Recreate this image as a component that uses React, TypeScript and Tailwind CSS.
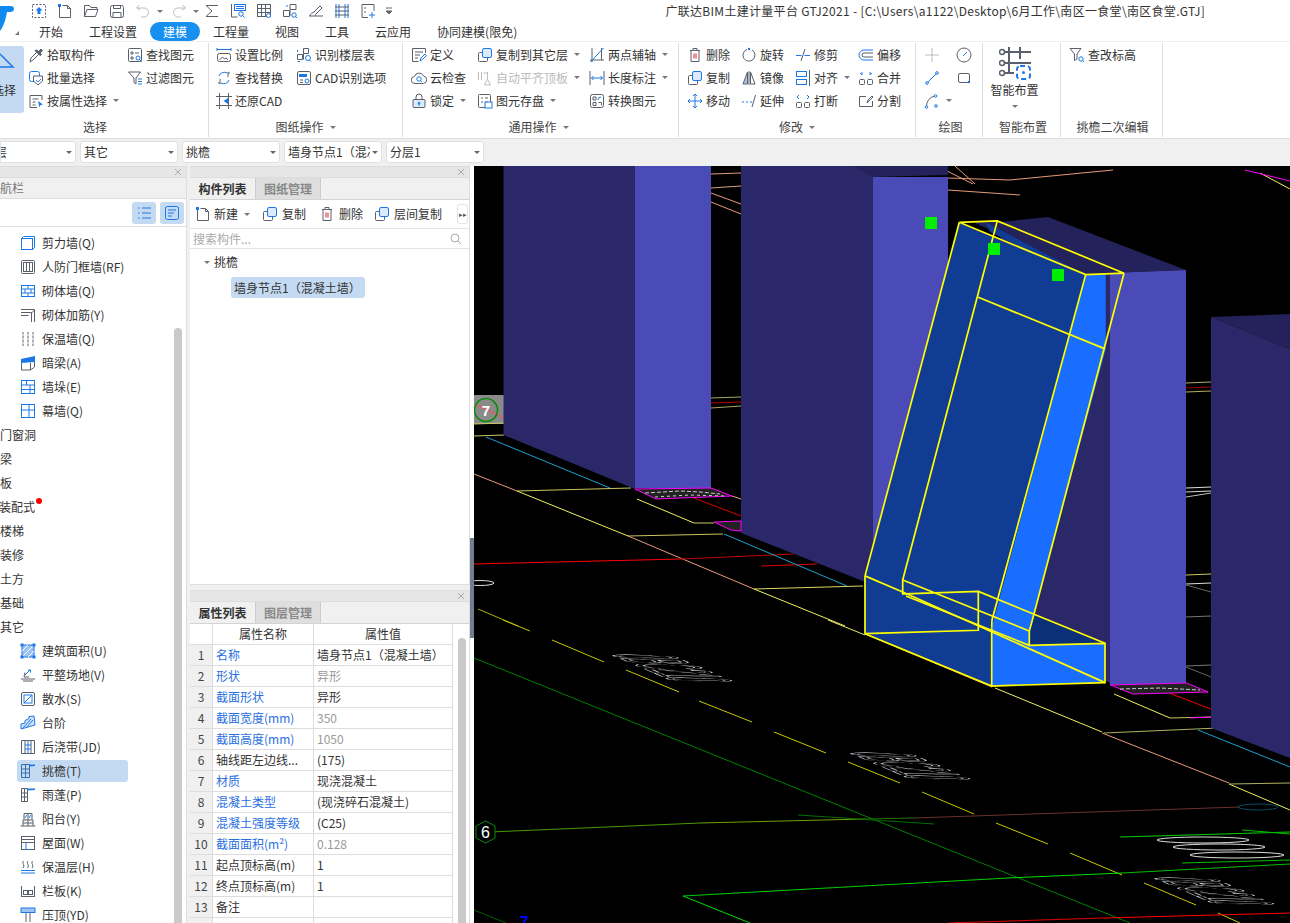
import type { ReactNode } from 'react';

const G = '#59606b';
const B = '#1c78e6';
const L = '#bdbdbd';

const P = ({ d, c = G, f = 'none' }: { d: string; c?: string; f?: string }) => <path d={d} stroke={c} fill={f} />;

const Ic = ({ children, s = 16 }: { children: ReactNode; s?: number }) => (
    <svg width={s} height={s} viewBox="0 0 16 16" fill="none" className="shrink-0">{children}</svg>
);

const Caret = () => <span className="ml-[6px] inline-block w-0 h-0 border-x-[3px] border-x-transparent border-t-[3px] border-t-[#777]" />;

const docCorner = <><P d="M2.5 3.5v11h11v-9l-3-3h-5" /><P d="M10.5 2.5v3h3" /><rect x="1" y="1" width="3" height="3" fill={B} /></>;
const trash = <><P d="M3 3.5h10M6 3.5v-2h4v2M4 3.5v11h8v-11" /><P d="M7 6.5v5M9 6.5v5" c="#e02020" /></>;
const copy = <><rect x="5.5" y="1.5" width="9" height="9" rx="1.5" stroke={B} fill="#dcebfb" /><P d="M5 5.5H2.5a1 1 0 0 0-1 1v7a1 1 0 0 0 1 1h7a1 1 0 0 0 1-1V11" /></>;

const icons: Record<string, ReactNode> = {
    pick: <><P d="M2 15l1-4 6-6 2 2-6 6z" /><P d="M9 3l1.5 1.5L13 2l1.5 1.5L12 6l1.5 1.5-1.5 1-5-5z" f="#59606b" /></>,
    batch: <><rect x="1.500" y="1.500" width="10" height="10" rx="2" stroke={B} /><P d="M5.500 6h9v5l-4.500 4-4.500-4z" f="#fff" /><P d="M8 10l2 2 3-3" c={B} /></>,
    attr: <><P d="M14 7V2.500H2v12h7" /><P d="M4.500 6h6M4.500 9h3M4.500 12h3" /><path d="M10 8l5 3.500-2.500.5-1 2.500z" fill={B} /></>,
    find: <><rect x="1.500" y="1.500" width="13" height="13" rx="1" stroke={G} /><P d="M4 5h2v2H4zM8 6h4M4 10h2v2H4z" /><circle cx="11" cy="11" r="2" stroke={B} /><P d="M12.500 12.500l2 2" c={B} /></>,
    filter: <><P d="M1.500 2h12L9 8v6l-2-1.500V8z" /><P d="M11 9h4M11 11.500h4M11 14h4" c={B} /></>,
    scale: <><P d="M1 2.500h14M1 1v3M15 1v3" c={B} /><rect x="1.500" y="6.500" width="13" height="8" rx="2" stroke={G} /><P d="M3.500 13l3-3 2 2 1.500-1 2 2" /></>,
    replace: <><P d="M3 6a5.500 5.500 0 0 1 8-3M13 10a5.500 5.500 0 0 1-8 3" c={B} /><P d="M4 9v5l-2-1.500M12 7V2l2 1.500" /></>,
    restore: <><P d="M3.500 0v16M0 3.500h16M12.500 0v16M0 12.500h16" /><path d="M12 5L7.500 8 12 11z" fill={B} /></>,
    floors: <><P d="M7.500 1.500h5v5h-5zM1.500 7.500h5v5h-5zM7.500 6.500v6" /><P d="M1.500 5v-2M4 14.500H1.500" c={B} /><circle cx="12" cy="11" r="2.500" stroke={B} /><P d="M13.500 13l1.500 1.500" c={B} /></>,
    cad: <><rect x="1.500" y="1.500" width="13" height="13" rx="1.500" stroke={G} /><rect x="3" y="4" width="8" height="3" fill={B} /><circle cx="11" cy="11" r="2" stroke={B} /><P d="M4 10h3M4 12.500h3" /></>,
    define: <><P d="M14.500 6V1.500h-13v13h6" /><P d="M4 5h8M4 8h5M4 11h3" /><P d="M9 14l1-3 4-4 1.500 1.500-4 4z" c={B} /></>,
    cloud: <><P d="M4 13.500a3.500 3.500 0 0 1-.5-7A4.800 4.800 0 0 1 12.500 6a3.800 3.800 0 0 1 0 7.500z" /><circle cx="8" cy="9" r="2.200" stroke={B} /><P d="M9.500 10.500l1.500 1.500" c={B} /></>,
    lock: <><rect x="2" y="6.500" width="12" height="8" rx="1" stroke={G} fill="#dcebfb" /><P d="M5 6.500V4a3 3 0 0 1 6 0v2.500" /><path d="M8 8.500l1.800 2H8.700v2H7.300v-2H6.200z" fill={B} /></>,
    copyTo: copy,
    autoFlat: <><P d="M1.500 2v8M4.500 2v8M6.500 3h4" c={L} /><P d="M10.500 2v7l-3 6M10.500 9l3 6M7.500 15h6" c={L} /></>,
    saveEl: <><rect x="1.500" y="1.500" width="12" height="13" rx="1" stroke={G} /><P d="M4 5h2M8 5h3M4 9h2M8 9h3" /><rect x="8" y="9" width="7" height="6" fill="#fff" stroke={B} /></>,
    twoAxis: <><P d="M3 1v14M1 13h14M12.500 1v12" /><P d="M1.500 15L14.500 1" c={B} /></>,
    dim: <><P d="M1 1v14M15 1v14" c={G} /><P d="M2.500 8h11M4.500 6l-2 2 2 2M11.500 6l2 2-2 2" c={B} /></>,
    convert: <><rect x="1.500" y="1.500" width="13" height="13" rx="2" stroke={G} /><P d="M4 4h3v3H4zM4 9.500h3v3H4zM9.500 9.500h3v3" /><P d="M9 7a3 3 0 0 1 3-3" c={B} /></>,
    del: trash,
    rotate: <><P d="M6 2.500A6 6 0 1 0 11 3" /><circle cx="8" cy="2" r="1.200" fill={B} /></>,
    trim: <><P d="M1 8.500h5.500M9.500 8.500H15" c={B} /><P d="M10 2L6 14" /></>,
    offset: <><P d="M15 3H6a5 5 0 0 0 0 10h9" c={B} /><P d="M15 6H6a2 2 0 0 0 0 4h9" /></>,
    copyB: copy,
    mirror: <><P d="M6.500 2v12H2z" c={G} f="#a9c4e6" /><P d="M9.500 2v12H14z" /><P d="M8 1v14" c={G} /></>,
    align: <><rect x="1.500" y="1.500" width="10" height="5" stroke={B} /><rect x="1.500" y="9.500" width="10" height="5" stroke={B} /><P d="M14.500 0v16" /></>,
    merge: <><rect x="1.500" y="9.500" width="5" height="5" rx="1" stroke={G} /><rect x="9.500" y="9.500" width="5" height="5" rx="1" stroke={G} /><P d="M2 3l2 2 M4 5V2M14 3l-2 2M12 5V2" c={B} /></>,
    move: <><P d="M8 1v14M1 8h14" c={B} /><P d="M6 3l2-2 2 2M6 13l2 2 2-2M3 6L1 8l2 2M13 6l2 2-2 2" c={B} /></>,
    extend: <><P d="M1 9h2M5 9h2M9 9h2" c={B} /><P d="M14.500 2L11 14" /></>,
    breakIc: <><rect x="1.500" y="9.500" width="5" height="5" rx="1" stroke={G} /><rect x="9.500" y="9.500" width="5" height="5" rx="1" stroke={G} /><P d="M4 2l-2 2 2 2M12 2l2 2-2 2" c={B} /></>,
    split: <><P d="M8 3.500H1.500v10h13V8" /><P d="M9 10l1-3 4-4 1 1-4 4z" /></>,
    snap: <><P d="M8 1v5M8 10v5M1 8h5M10 8h5" c={L} /><circle cx="8" cy="8" r="1.500" fill={L} /></>,
    dial: <><circle cx="8" cy="8" r="7" stroke={G} /><P d="M7 9l4-4" c={B} /></>,
    lineD: <><P d="M3 13L13 3" c={B} /><circle cx="3" cy="13" r="1.300" fill="#fff" stroke={B} /><circle cx="13" cy="3" r="1.300" fill="#fff" stroke={B} /></>,
    rectD: <><rect x="2.500" y="3.500" width="11" height="9" rx="1.500" stroke={G} /><circle cx="13" cy="12" r="1.200" fill={B} /></>,
    arc: <><P d="M2.500 14a10 10 0 0 1 9-11" /><circle cx="2.500" cy="14" r="1.300" fill="#fff" stroke={B} /><circle cx="11.500" cy="3" r="1.300" fill="#fff" stroke={B} /><circle cx="12" cy="13" r="1.300" fill="#fff" stroke={B} /></>,
    editEl: <><P d="M1 1.500h11L8 7v5l-2.500 1.500V7z" /><circle cx="12" cy="12" r="2.200" stroke={B} /><P d="M13.500 13.500l1.500 1.500" c={B} /></>,

    shear: <><rect x="1.500" y="3.500" width="11" height="11" stroke={B} /><P d="M1.500 3.500l2-2h11v11l-2 2" c={B} /></>,
    door: <><rect x="1.500" y="1.500" width="13" height="13" rx="1" stroke={G} /><rect x="3.500" y="3.500" width="9" height="9" stroke={G} /><P d="M6.500 3.500v9M9.500 3.500v9" /></>,
    brick: <><rect x="1.500" y="2.500" width="13" height="11" stroke={B} /><P d="M1.500 6h13M1.500 10h13M8 2.500V6M5 6v4M11 6v4M8 10v3.500" c={B} /></>,
    rebar: <><P d="M1 2.500h13.500V15M1 5.500h10.500V15M1 8.500h7.500" /><P d="M14.500 3L11.500 6" /></>,
    insul: <><P d="M3 1v14M8 1v14M13 1v14" /><P d="M1 4h14M1 8h14M1 12h14" c="#fff" /></>,
    beam: <><path d="M1 4l14-3v6L1 8z" fill={B} /><P d="M1.500 8v7h9V8M10.500 15l4-3V7" /></>,
    pier: <><rect x="1.500" y="1.500" width="13" height="13" stroke={B} /><P d="M1.500 6h13M1.500 10.500h13M6.500 1.500V6M10 6v4.500M10 10.500v4" c={B} /></>,
    curtain: <><rect x="1.500" y="1.500" width="13" height="13" stroke={B} /><P d="M1.500 7h13M9 1.500v13" c={B} /></>,
    area: <><rect x="2" y="2" width="12" height="12" fill="#9cc4f2" stroke={B} /><P d="M2 8l6-6M2 14L14 2M8 14l6-6" c="#fff" /><rect x="0.500" y="0.500" width="3" height="3" fill={B} /><rect x="12.500" y="0.500" width="3" height="3" fill={B} /><rect x="0.500" y="12.500" width="3" height="3" fill={B} /><rect x="12.500" y="12.500" width="3" height="3" fill={B} /></>,
    level: <><P d="M5 8l5-5M8 3h2.500v2.500" c={B} /><P d="M5 5.500L4 10h5" /><P d="M1 12h14M3 14h10" c={G} /></>,
    apron: <><rect x="1.500" y="1.500" width="13" height="13" rx="1.500" stroke={G} /><P d="M4 12l8-8" c={B} /><rect x="4" y="4" width="8" height="8" stroke={B} /></>,
    steps: <><path d="M1 9l4-1V5.500l4-2V1.500l5-.5 1 9-14 4z" fill="#cfe2f8" stroke={B} /><P d="M3 13l8-9M6 13l7-8" c={B} /></>,
    post: <><P d="M1.500 1.500h13v13h-13zM5 1.500v13M11 1.500v13" /><P d="M5 6h6M5 10h6M8 1.500v13" c={B} /></>,
    eave: <><P d="M1.500 1.500h8v13h-8zM5.500 1.500v13M1.500 6h8M1.500 10h8" c="#3a6ea8" /><path d="M9.500 1.500H15v1.500L9.500 3.500z" fill={B} /></>,
    canopy: <><P d="M1.500 1.500h6v13h-6zM4.500 1.500v13M1.500 6h6M1.500 10h6" /><path d="M7.500 1.500H15v1.500L7.500 3.500z" fill={B} /></>,
    balcony: <><P d="M.5 15h15M3 15V9h10v6M8 9v6M3 12h10" /><P d="M4 9V2.500h8V9M8 2.500V9" c={G} /><P d="M5 7l2-3M9 7l2-3" c={B} /></>,
    roof: <><rect x="1.500" y="1.500" width="13" height="13" stroke={G} /><P d="M1.500 4.500h13M1.500 7.500h13" /><P d="M6 7.500v7h4" c={B} /></>,
    heat: <><P d="M3.500 2c-2 2.500 2 4-.5 7M8 2c-2 2.500 2 4-.5 7M12.500 2c-2 2.500 2 4-.5 7" /><P d="M1 11.500h14M1 14h14" c={B} /></>,
    slab: <><P d="M1.500 3v10.500h13V3M1 13.500h14" /><rect x="3.500" y="7.500" width="4" height="4" stroke={G} /><rect x="8.500" y="7.500" width="4" height="4" stroke={G} /></>,
    coping: <><rect x="1" y="1" width="14" height="4.500" fill="#9cc4f2" stroke={B} /><P d="M6 5.500V15M10 5.500V15" /></>,
};

const Item = ({ ic, text, caret, disabled }: { ic: string; text: string; caret?: boolean; disabled?: boolean }) => (
    <div className={`h-[23px] flex items-center whitespace-nowrap ${disabled ? 'text-[#bbbbbb]' : ''}`}>
        <Ic>{icons[ic]}</Ic>
        <span className="ml-[3px]">{text}</span>
        {caret && <Caret />}
    </div>
);

const Group = ({ title, w, caret, tp, children }: { title: string; w: string; caret?: boolean; tp?: string; children: ReactNode }) => (
    <div className={`${w} shrink-0 h-[94px] mt-[1px] flex flex-col border-r border-[#dddddd]`}>
        <div className="h-[74px] flex">{children}</div>
        <div className={`h-[20px] flex items-center justify-center text-[#444] ${tp ?? ''}`}>
            {title}{caret && <Caret />}
        </div>
    </div>
);

const Select = ({ text, w = 'w-[98px]', clip }: { text: string; w?: string; clip?: boolean }) => (
    <div className={`${w} h-[22px] bg-white border border-[#e0e0e0] rounded-[3px] flex items-center justify-between pl-[3px] pr-[3px] shrink-0 overflow-hidden`}>
        <span className={clip ? 'w-[82px] overflow-hidden whitespace-nowrap' : 'whitespace-nowrap'}>{text}</span>
        <span className="w-0 h-0 border-x-[3px] border-x-transparent border-t-[3px] border-t-[#666]" />
    </div>
);

const CloseStrip = () => (
    <div className="h-[12px] bg-[#e6e6e6] border-y border-[#dddddd] flex items-center justify-end pr-[4px] text-[#aaaaaa] shrink-0">
        <svg width="8" height="8" viewBox="0 0 8 8"><path d="M1 1l6 6M7 1L1 7" stroke="#aaa" /></svg>
    </div>
);

const Tabs = ({ a, b }: { a: string; b: string }) => (
    <div className="h-[22px] flex bg-[#f0f0f0] border-b border-[#d4d4d4] shrink-0">
        <div className="w-[65px] flex items-center justify-center font-bold text-[#333]">{a}</div>
        <div className="w-[66px] flex items-center justify-center bg-[#dedede] border-x border-[#cccccc] text-[#888888] font-bold">{b}</div>
    </div>
);

const NAV: [string, string?, boolean?][] = [
    ['剪力墙(Q)', 'shear'], ['人防门框墙(RF)', 'door'], ['砌体墙(Q)', 'brick'], ['砌体加筋(Y)', 'rebar'], ['保温墙(Q)', 'insul'], ['暗梁(A)', 'beam'], ['墙垛(E)', 'pier'], ['幕墙(Q)', 'curtain'],
    ['门窗洞'], ['梁'], ['板'], ['装配式'], ['楼梯'], ['装修'], ['土方'], ['基础'], ['其它'],
    ['建筑面积(U)', 'area'], ['平整场地(V)', 'level'], ['散水(S)', 'apron'], ['台阶', 'steps'], ['后浇带(JD)', 'post'], ['挑檐(T)', 'eave', true], ['雨蓬(P)', 'canopy'], ['阳台(Y)', 'balcony'], ['屋面(W)', 'roof'], ['保温层(H)', 'heat'], ['栏板(K)', 'slab'], ['压顶(YD)', 'coping'],
];

const PROPS: [string, string, 'b' | 'k', 'k' | 'g'][] = [
    ['名称', '墙身节点1（混凝土墙）', 'b', 'k'],
    ['形状', '异形', 'b', 'g'],
    ['截面形状', '异形', 'b', 'k'],
    ['截面宽度(mm)', '350', 'b', 'g'],
    ['截面高度(mm)', '1050', 'b', 'g'],
    ['轴线距左边线...', '(175)', 'k', 'k'],
    ['材质', '现浇混凝土', 'b', 'k'],
    ['混凝土类型', '(现浇碎石混凝土)', 'b', 'k'],
    ['混凝土强度等级', '(C25)', 'b', 'k'],
    ['截面面积(m²)', '0.128', 'b', 'g'],
    ['起点顶标高(m)', '1', 'k', 'k'],
    ['终点顶标高(m)', '1', 'k', 'k'],
    ['备注', '', 'k', 'k'],
    ['', '', 'k', 'k'],
];

// x1, y1, x2, y2, colour
const LINES: [number, number, number, number, string][] = [
    [711, 174, 741, 173, '#e89a7a'], [711, 188, 741, 186, '#d9a080'], [711, 193, 741, 204, '#e89a7a'], [711, 202, 741, 214, '#e89a7a'],
    [711, 398, 741, 397, '#a8a860'], [711, 403, 741, 402, '#c00000'], [711, 408, 741, 406, '#a8a860'],
    [474, 436, 504, 435, '#c8c860'], [486, 437, 610, 488, '#1aa0d0'], [474, 474, 517, 491, '#e89a7a'], [517, 491, 631, 488, '#c8c860'],
    [517, 491, 628, 536, '#f0f060'], [628, 536, 723, 534, '#c8c860'], [628, 536, 754, 589, '#e89a7a'], [754, 589, 863, 586, '#d8d860'], [754, 589, 845, 626, '#f0f060'],
    [474, 564, 681, 559, '#ff0000'], [681, 559, 794, 554, '#c00000'], [761, 566, 817, 564, '#e00000'], [724, 534, 847, 586, '#1aa0d0'],
    [694, 498, 741, 516, '#e00000'], [637, 499, 694, 523, '#f0f060'], [694, 523, 714, 523, '#c8c860'], [732, 496, 741, 499, '#e89a7a'], [478, 609, 518, 626, '#b0b000'],
    [937, 166, 973, 184, '#e89a7a'], [948, 178, 1010, 180, '#e89a7a'], [1010, 180, 1113, 170, '#e89a7a'], [948, 190, 1020, 195, '#e89a7a'], [955, 166, 975, 184, '#e89a7a'],
    [1260, 173, 1290, 189, '#f0f060'], [1245, 170, 1290, 181, '#ff00ff'],
    [503, 620, 530, 631, '#c8c800'], [552, 640, 604, 662, '#c8c800'], [626, 670, 679, 692, '#c8c800'], [699, 701, 752, 722, '#c8c800'], [774, 732, 826, 753, '#c8c800'], [848, 762, 900, 783, '#c8c800'], [922, 792, 974, 814, '#c8c800'], [996, 823, 1048, 844, '#c8c800'], [1070, 853, 1122, 875, '#c8c800'], [1144, 883, 1196, 905, '#c8c800'], [1218, 913, 1240, 923, '#c8c800'],
    [474, 658, 1130, 923, '#008000'], [490, 832, 700, 823, '#4a9a00'], [700, 823, 865, 819, '#70a000'], [865, 819, 914, 818, '#2a7000'], [914, 818, 1240, 807, '#6b3030'], [798, 815, 934, 824, '#007000'],
    [828, 620, 865, 635, '#e8e860'], [865, 634, 992, 687, '#ffb050'], [995, 688, 1102, 732, '#f0f060'], [1102, 733, 1229, 783, '#e89a7a'], [1104, 733, 1218, 728, '#b0b060'], [1229, 784, 1290, 810, '#f0f060'], [1229, 784, 1290, 783, '#b0b060'], [1198, 730, 1290, 767, '#1aa0d0'],
    [1114, 694, 1170, 718, '#f0f060'], [1170, 718, 1211, 717, '#c8c860'], [1169, 693, 1211, 709, '#f00000'],
    [1186, 383, 1211, 382, '#b0b060'], [1186, 388, 1211, 387, '#a00000'], [1186, 392, 1211, 391, '#b0b060'], [1186, 488, 1211, 487, '#dddddd'], [1186, 492, 1211, 491, '#dddddd'], [1186, 497, 1211, 493, '#bbbbbb'],
    [1186, 575, 1211, 574, '#c8c860'], [1186, 584, 1211, 583, '#dddddd'], [1186, 585, 1211, 592, '#666666'], [1186, 617, 1211, 616, '#777777'], [1186, 666, 1211, 665, '#777777'], [1186, 667, 1211, 677, '#666666'],
    [683, 896, 1008, 878, '#00d000'], [1008, 878, 1122, 873, '#00e000'], [1122, 873, 1290, 864, '#00c000'], [683, 896, 750, 923, '#00e000'],
    [1120, 837, 1290, 832, '#00d000'], [1242, 830, 1290, 834, '#00c000'], [1182, 863, 1290, 860, '#00c000'], [948, 923, 1104, 918, '#e00000'], [1104, 918, 1290, 913, '#ff0000'], [474, 910, 506, 923, '#006000'],
];

const YELLOW = [
    '959.300,222.300 997.300,220.900 1124,273.200 1085.700,274.600 959.300,222.300',
    '865,575.900 959.300,222.300', '902.700,580 997.300,220.900', '978.300,297.300 1105,348.900',
    '1085.700,274.600 992,620 991.700,627.500', '1124,273.200 1034,614 1029.300,631 1029.300,645.400 1105,643.300 1105,682.600 991.700,686 991.700,627.500',
    '865,575.900 865,633.700 991.700,686', '865,633.700 978.300,630.300 978.300,591.400 905,593.800 902.700,593.800 902.700,580 1029.300,631',
    '978.300,591.400 1105,643.300', '865,575.900 902.700,592 1105,682.600', '906,596 1029.300,645.400',
];

const CADTEXT: [string, number, number][] = [
    ['0BC210', 630, 670], ['0BC210', 868, 768], ['0BC210', 1172, 893],
];

const Canvas = () => (
    <svg width="816" height="757" viewBox="474 166 816 757" className="block">
        {LINES.map(([x1, y1, x2, y2, c], i) => <line key={i} x1={x1} y1={y1} x2={x2} y2={y2} stroke={c} />)}

        {/* grid bubble 7 */}
        <rect x="474" y="395" width="30" height="29" fill="#8a8a8a" />
        <line x1="474" y1="424" x2="504" y2="423" stroke="#c8c860" />
        <line x1="474" y1="404" x2="504" y2="418" stroke="#ff5050" />
        <circle cx="486" cy="410" r="11.500" stroke="#0a8a0a" strokeWidth="1.500" fill="none" />
        <text x="486" y="416" fill="#fff" fontSize="15" fontWeight="700" textAnchor="middle" fontFamily="Liberation Sans, sans-serif">7</text>

        {/* columns */}
        <polygon points="503.500,166 635,166 635,489 503.500,435" fill="#2a2868" />
        <rect x="635" y="166" width="76" height="322" fill="#4b4bb8" />
        <polygon points="741,166 873,166 873,585 741,533" fill="#2a2868" />
        <polygon points="853,166 948,166 948,175 873,177" fill="#23225a" />
        <rect x="873" y="177" width="75" height="400" fill="#4b4bb8" />
        <polygon points="1000,222 1048,217 1186,270 1110,273" fill="#23225a" />
        <polygon points="1000,230 1110,273 1110,683 1030,645" fill="#2a2868" />
        <polygon points="1211,317 1290,314 1290,349" fill="#23225a" />
        <polygon points="1211,317 1290,349 1290,758 1211,728" fill="#2a2868" />

        {/* selected eave */}
        <polygon points="973,222 997,221 1124,273 1086,275" fill="#23225a" />
        <polygon points="985,222 1086,275 1060,266 990,232" fill="#103c94" />
        <polygon points="959.300,222.300 1085.700,274.600 991.700,627.500 991.700,686 865,633.700 865,575.900" fill="#103c94" />
        <polygon points="1085.700,274.600 1105.700,274 1105.700,349 1029.300,631 1029.300,645.400 1105,643.300 1105,682.600 991.700,686 991.700,627.500" fill="#1a6eff" />
        <polygon points="1034,614 1105,643.300 1029.300,645.400 1029.300,631" fill="#0c2f7a" />
        <polygon points="1110,273 1186,270 1186,683 1110,685" fill="#4b4bb8" />
        {YELLOW.map((p, i) => <polyline key={i} points={p} fill="none" stroke="#ffff00" strokeWidth="1.700" />)}

        <rect x="925" y="217" width="12" height="12" fill="#00ee00" />
        <rect x="988" y="243" width="12" height="12" fill="#00ee00" />
        <rect x="1052" y="269" width="12" height="12" fill="#00ee00" />

        {/* rebar markers at column feet */}
        <polygon points="635,489 711,488 732,496 656,499" fill="#222" stroke="#ff00ff" />
        <polyline points="645,493 680,491 700,492 720,494" fill="none" stroke="#ccc" strokeDasharray="4 2" />
        <polyline points="655,497 690,495 725,496" fill="none" stroke="#ccc" strokeDasharray="3 3" />
        <polygon points="714,522 741,521 741,531 731,530" fill="#222" stroke="#ff00ff" />
        <polygon points="1110.500,685 1186.500,683 1208,692 1133,694" fill="#222" stroke="#ff00ff" />
        <polyline points="1120,689 1160,688 1200,690" fill="none" stroke="#ccc" strokeDasharray="4 2" />
        <polyline points="1190,718 1211,717" fill="none" stroke="#ff00ff" />

        {/* axis labels */}
        {CADTEXT.map(([t, x, y]) => (
            <text key={x} transform={`matrix(1.75 0.75 -9 -0.2 ${x} ${y})`} x="-22" y="-2" fontSize="10" fontFamily="Liberation Sans, sans-serif" fill="none" stroke="#f0f0f0" strokeWidth="1" style={{ vectorEffect: 'non-scaling-stroke' }}>{t}</text>
        ))}
        <ellipse cx="1203" cy="840" rx="46" ry="3" fill="none" stroke="#ddd" />
        <ellipse cx="1219" cy="847" rx="46" ry="3" fill="none" stroke="#ddd" />
        <ellipse cx="1237" cy="855" rx="47" ry="3" fill="none" stroke="#ddd" />
        <ellipse cx="480" cy="583" rx="14" ry="2.500" fill="none" stroke="#ddd" />

        <polygon points="485.500,821 495,826 495,838 485.500,843 476,838 476,826" fill="#000" stroke="#0a8a0a" />
        <text x="485.500" y="838" fill="#fff" fontSize="16" textAnchor="middle" fontFamily="Liberation Sans, sans-serif">6</text>
        <ellipse cx="1258" cy="807" rx="20" ry="3" fill="none" stroke="#0a4a66" />
        <text x="524" y="928" fill="#0000ff" fontSize="16" fontWeight="700" textAnchor="middle" fontFamily="Liberation Sans, sans-serif">7</text>
    </svg>
);

const App = () => {
    return (
        <div className="w-[1290px] h-[923px] overflow-hidden flex flex-col bg-[#f0f0f0] text-[12px] leading-none text-[#333] [text-spacing-trim:space-all]" style={{ fontFamily: '"Noto Sans CJK SC", "Liberation Sans", sans-serif' }}>
            {/* title + tabs */}
            <div className="h-[41px] bg-white flex shrink-0">
                <div className="w-[26px] shrink-0 relative">
                    <svg width="16" height="32" viewBox="0 0 16 32" className="absolute left-0 top-[2px]">
                        <path d="M0 4h10c3 0 4 1 4 3s-2 3-4 3H7c-1 6-3 14-7 19z" fill="#0d8af0" />
                    </svg>
                    <span className="absolute left-[15px] top-[31px] border-l-[4px] border-l-transparent border-b-[4px] border-b-[#777]" />
                </div>
                <div className="flex-1 flex flex-col">
                    <div className="h-[22px] flex items-center pl-[5px] gap-[10px]">
                        <Ic><rect x="1.500" y="1.500" width="13" height="13" stroke={G} strokeDasharray="2 1.500" /><path d="M8 4l3.500 3.500H9.500V11h-3V7.500H4.500z" fill={B} /></Ic>
                        <Ic>{docCorner}</Ic>
                        <Ic><P d="M1.500 13.500v-11h5l1.500 2h6v2" /><P d="M1.500 13.500l2.500-7h11l-2.500 7z" /></Ic>
                        <Ic><rect x="1.500" y="2.500" width="13" height="12" rx="2" stroke={G} /><P d="M4.500 2.500v3h7v-3M4 14.500v-5h8v5" /></Ic>
                        <div className="w-[26px] flex items-center">
                            <Ic><P d="M4 2L1.500 5 5 7M2 5h7a4 4 0 0 1 0 9H6" c={L} /></Ic>
                            <Caret />
                        </div>
                        <div className="w-[23px] flex items-center">
                            <Ic><P d="M12 2l2.500 3L11 7M14 5H7a4 4 0 0 0 0 9h3" c={L} /></Ic>
                            <Caret />
                        </div>
                        <Ic><P d="M14 2.500H2l6 5.500-6 5.500h12" /></Ic>
                        <Ic><P d="M1.500 1v13h6" /><rect x="4.500" y="1.500" width="11" height="6" stroke={B} /><P d="M6 3.500h8M6 5.500h8" c={B} /><circle cx="11" cy="11" r="2.200" stroke={B} /><P d="M12.500 12.500l2 2" c={B} /></Ic>
                        <Ic><rect x="1.500" y="1.500" width="13" height="12" stroke={G} /><P d="M1.500 5.500h13M1.500 9.500h13M5.500 1.500v12M9.500 1.500v12" /><circle cx="12.500" cy="12.500" r="2" stroke={B} fill="#fff" /></Ic>
                        <Ic><P d="M8 1.500h6v5H8zM1.500 7.500h6v6h-6zM8 7v6" /><circle cx="12" cy="12" r="2.200" stroke={B} /><P d="M13.500 13.500l1.500 1.500M4 3h2" c={B} /></Ic>
                        <Ic><P d="M1 13h14M2 13c0-3 3-3 4-4l6-6 2 2-6 6c-1 1-1 2-1 2" /></Ic>
                        <Ic><P d="M2 1v14M14 1v14M5 1v14M11 1v14" c={B} /><P d="M1 4h14M1 8h14M1 12h14" /></Ic>
                        <Ic><P d="M14 8V1.500H2v13h6" /><P d="M4 5h2M4 9h2" /><P d="M12 9v6M9 12h6" c={B} /></Ic>
                        <svg width="6" height="8" viewBox="0 0 6 8"><path d="M0 1h6M0 4l3 3 3-3z" stroke="#666" fill="#666" /></svg>
                        <span className="ml-auto mr-[85px] text-[#333] whitespace-nowrap tracking-[0.31px]">广联达BIM土建计量平台 GTJ2021 - [C:\Users\a1122\Desktop\6月工作\南区一食堂\南区食堂.GTJ]</span>
                    </div>
                    <div className="h-[19px] flex items-center">
                        {['开始', '工程设置', '建模', '工程量', '视图', '工具', '云应用', '协同建模(限免)'].map(t => (
                            <div key={t} className={`h-[19px] px-[13px] flex items-center rounded-full ${t === '建模' ? 'bg-[#1890f0] text-white' : ''}`}>{t}</div>
                        ))}
                    </div>
                </div>
            </div>

            {/* ribbon */}
            <div className="h-[98px] bg-white border-t border-[#f0f0f0] border-b border-b-[#dddddd] flex shrink-0">
                <Group title="选择" w="w-[209px]" tp="pr-[18px]">
                    <div className="w-[24px] h-[67px] mt-[3px] bg-[#c4daf2] rounded-r-[3px] overflow-hidden flex flex-col shrink-0">
                        <svg width="24" height="28" viewBox="0 0 24 28" className="mt-[6px] shrink-0"><path d="M0 2l13 13H0" stroke={B} strokeWidth="1.500" fill="none" /></svg>
                        <span className="-ml-[8px] mt-[4px] whitespace-nowrap">选择</span>
                    </div>
                    <div className="ml-[4px] w-[99px]">
                        <Item ic="pick" text="拾取构件" />
                        <Item ic="batch" text="批量选择" />
                        <Item ic="attr" text="按属性选择" caret />
                    </div>
                    <div>
                        <Item ic="find" text="查找图元" />
                        <Item ic="filter" text="过滤图元" />
                    </div>
                </Group>
                <Group title="图纸操作" w="w-[194px]" caret>
                    <div className="ml-[7px] w-[80px]">
                        <Item ic="scale" text="设置比例" />
                        <Item ic="replace" text="查找替换" />
                        <Item ic="restore" text="还原CAD" />
                    </div>
                    <div>
                        <Item ic="floors" text="识别楼层表" />
                        <Item ic="cad" text="CAD识别选项" />
                    </div>
                </Group>
                <Group title="通用操作" w="w-[276px]" tp="pr-[4px]" caret>
                    <div className="ml-[8px] w-[66px]">
                        <Item ic="define" text="定义" />
                        <Item ic="cloud" text="云检查" />
                        <Item ic="lock" text="锁定" caret />
                    </div>
                    <div className="w-[112px]">
                        <Item ic="copyTo" text="复制到其它层" caret />
                        <Item ic="autoFlat" text="自动平齐顶板" caret disabled />
                        <Item ic="saveEl" text="图元存盘" caret />
                    </div>
                    <div>
                        <Item ic="twoAxis" text="两点辅轴" caret />
                        <Item ic="dim" text="长度标注" caret />
                        <Item ic="convert" text="转换图元" />
                    </div>
                </Group>
                <Group title="修改" w="w-[237px]" caret>
                    <div className="ml-[8px] w-[54px]">
                        <Item ic="del" text="删除" />
                        <Item ic="copyB" text="复制" />
                        <Item ic="move" text="移动" />
                    </div>
                    <div className="w-[54px]">
                        <Item ic="rotate" text="旋转" />
                        <Item ic="mirror" text="镜像" />
                        <Item ic="extend" text="延伸" />
                    </div>
                    <div className="w-[63px]">
                        <Item ic="trim" text="修剪" />
                        <Item ic="align" text="对齐" caret />
                        <Item ic="breakIc" text="打断" />
                    </div>
                    <div>
                        <Item ic="offset" text="偏移" />
                        <Item ic="merge" text="合并" />
                        <Item ic="split" text="分割" />
                    </div>
                </Group>
                <Group title="绘图" w="w-[67px]" tp="pl-[3px]">
                    <div className="ml-[8px] w-[32px]">
                        <div className="h-[23px] flex items-center"><Ic>{icons.snap}</Ic></div>
                        <div className="h-[23px] flex items-center"><Ic>{icons.lineD}</Ic></div>
                        <div className="h-[23px] flex items-center"><Ic>{icons.arc}</Ic><Caret /></div>
                    </div>
                    <div>
                        <div className="h-[23px] flex items-center"><Ic>{icons.dial}</Ic></div>
                        <div className="h-[23px] flex items-center"><Ic>{icons.rectD}</Ic></div>
                    </div>
                </Group>
                <Group title="智能布置" w="w-[78px]" tp="pl-[3px]">
                    <div className="w-full flex flex-col items-center -ml-[7px]">
                        <svg width="32" height="34" viewBox="0 0 32 34" className="mt-[4px] shrink-0">
                            <path d="M10 0v26M21 0v12M3 5h29M3 16h29M3 26h12" stroke={G} strokeWidth="2" fill="none" />
                            <circle cx="3" cy="5" r="2.500" fill="#fff" stroke={G} strokeWidth="1.500" />
                            <circle cx="3" cy="16" r="2.500" fill="#fff" stroke={G} strokeWidth="1.500" />
                            <circle cx="3" cy="26" r="2.500" fill="#fff" stroke={G} strokeWidth="1.500" />
                            <rect x="18" y="19" width="13" height="13" rx="3" stroke={B} strokeWidth="2" strokeDasharray="5 3" fill="none" />
                            <circle cx="24.500" cy="25.500" r="1.500" fill={B} />
                        </svg>
                        <span className="mt-[3px]">智能布置</span>
                        <span className="mt-[9px] w-0 h-0 border-x-[3px] border-x-transparent border-t-[3px] border-t-[#777]" />
                    </div>
                </Group>
                <Group title="挑檐二次编辑" w="w-[102px]" tp="pl-[2px]">
                    <div className="ml-[8px]">
                        <Item ic="editEl" text="查改标高" />
                    </div>
                </Group>
            </div>

            {/* selectors */}
            <div className="h-[27px] flex items-start pt-[2px] gap-[4px] shrink-0">
                <div className="w-[76px] h-[22px] bg-white border border-[#e0e0e0] rounded-r-[3px] flex items-center justify-between pr-[3px] overflow-hidden shrink-0">
                    <span className="-ml-[6px]">层</span>
                    <span className="w-0 h-0 border-x-[3px] border-x-transparent border-t-[3px] border-t-[#666]" />
                </div>
                <Select text="其它" />
                <Select text="挑檐" />
                <Select text="墙身节点1（混凝土墙）" clip />
                <Select text="分层1" />
            </div>

            {/* main */}
            <div className="flex-1 flex min-h-0">
                {/* nav */}
                <div className="w-[187px] mr-[3px] shrink-0 bg-white border-r border-[#dddddd] flex flex-col relative overflow-hidden">
                    <CloseStrip />
                    <div className="h-[21px] bg-[#f0f0f0] border-b border-[#dddddd] flex items-center text-[#777] shrink-0">
                        <span className="-ml-[12px]">导航栏</span>
                    </div>
                    <div className="h-[28px] border-b border-[#dddddd] flex items-center justify-end gap-[4px] pr-[2px] shrink-0">
                        <div className="w-[24px] h-[22px] bg-[#c4daf2] rounded-[3px] flex items-center justify-center">
                            <Ic><P d="M2 3h1.500M2 8h1.500M2 13h1.500" c={B} /><P d="M6 3h9M6 8h9M6 13h9" c={B} /></Ic>
                        </div>
                        <div className="w-[24px] h-[22px] bg-[#c4daf2] rounded-[3px] flex items-center justify-center">
                            <Ic><rect x="1.500" y="1.500" width="13" height="13" rx="2" stroke={B} /><P d="M4 5h8M4 8h6M4 11h4" c={B} /></Ic>
                        </div>
                    </div>
                    <div className="pt-[4px]">
                        {NAV.map(([t, ic, sel]) => ic ? (
                            <div key={t} className="h-[24px] flex items-center">
                                <div className={`ml-[17px] h-[22px] flex items-center pl-[3px] rounded-[3px] ${sel ? 'w-[111px] bg-[#c4daf2]' : ''}`}>
                                    <Ic>{icons[ic]}</Ic>
                                    <span className="ml-[6px] whitespace-nowrap">{t}</span>
                                </div>
                            </div>
                        ) : (
                            <div key={t} className="h-[24px] flex items-center relative">
                                <span className={t === '装配式' ? '-ml-[1px]' : ''}>{t}</span>
                                {t === '装配式' && <span className="absolute left-[36px] top-[3px] w-[6px] h-[6px] rounded-full bg-[#ff0000]" />}
                            </div>
                        ))}
                    </div>
                    <div className="absolute left-[174px] top-[162px] bottom-0 w-[8px] rounded-t-[4px] bg-[#c9c9c9]" />
                </div>

                {/* component + property panels */}
                <div className="w-[284px] shrink-0 flex flex-col relative">
                    <div className="w-[280px] h-[419px] bg-white border-r border-b border-[#dddddd] flex flex-col overflow-hidden">
                        <CloseStrip />
                        <Tabs a="构件列表" b="图纸管理" />
                        <div className="h-[29px] flex items-center pl-[5px] border-b border-[#e4e4e4] relative shrink-0">
                            <Ic>{docCorner}</Ic>
                            <span className="ml-[3px]">新建</span>
                            <Caret />
                            <span className="ml-[12px]"><Ic>{copy}</Ic></span>
                            <span className="ml-[4px]">复制</span>
                            <span className="ml-[13px]"><Ic>{trash}</Ic></span>
                            <span className="ml-[4px]">删除</span>
                            <span className="ml-[11px]"><Ic>{copy}</Ic></span>
                            <span className="ml-[4px]">层间复制</span>
                            <div className="absolute right-[1px] top-[4px] w-[11px] h-[20px] border border-[#e4e4e4] rounded-[3px] flex items-center justify-center text-[7px] text-[#555]">▸▸</div>
                        </div>
                        <div className="h-[20px] flex items-center justify-between pl-[3px] pr-[7px] border-b border-[#e4e4e4] text-[#aaaaaa] shrink-0">
                            <span>搜索构件...</span>
                            <svg width="12" height="12" viewBox="0 0 12 12" fill="none"><circle cx="5" cy="5" r="4" stroke="#aaa" /><path d="M8 8l3 3" stroke="#aaa" /></svg>
                        </div>
                        <div className="pl-[14px] pt-[4px]">
                            <div className="h-[18px] flex items-center">
                                <span className="w-0 h-0 border-x-[3px] border-x-transparent border-t-[3px] border-t-[#777] mr-[4px]" />挑檐
                            </div>
                            <div className="mt-[6px] ml-[27px] w-[134px] h-[21px] bg-[#c4daf2] rounded-[3px] flex items-center pl-[3px] whitespace-nowrap">墙身节点1（混凝土墙）</div>
                        </div>
                    </div>
                    <div className="h-[5px] w-[280px] shrink-0" />
                    <div className="w-[280px] flex-1 min-h-0 bg-white border-r border-[#dddddd] flex flex-col overflow-hidden relative">
                        <CloseStrip />
                        <Tabs a="属性列表" b="图层管理" />
                        <div className="w-[263px] border-r border-[#dddddd]">
                            <div className="grid grid-cols-[23px_101px_138px] h-[21px] border-b border-[#dddddd]">
                                <div className="border-r border-[#dddddd]" />
                                <div className="border-r border-[#dddddd] flex items-center justify-center">属性名称</div>
                                <div className="flex items-center justify-center">属性值</div>
                            </div>
                            {PROPS.map(([k, v, kc, vc], i) => (
                                <div key={i} className="grid grid-cols-[23px_101px_138px] h-[21px] border-b border-[#dddddd]">
                                    <div className="border-r border-[#dddddd] bg-[#f0f0f0] flex items-center justify-center text-[#444]">{i + 1}</div>
                                    <div className={`border-r border-[#dddddd] flex items-center pl-[3px] whitespace-nowrap ${kc === 'b' ? 'text-[#2a6fe0]' : ''}`}>{k}</div>
                                    <div className={`flex items-center pl-[3px] whitespace-nowrap ${vc === 'g' ? 'text-[#999999]' : ''}`}>{v}</div>
                                </div>
                            ))}
                        </div>
                        <div className="absolute left-[268px] top-[48px] bottom-0 w-[8px] rounded-t-[4px] bg-[#c9c9c9]" />
                    </div>
                    <div className="absolute right-0 top-0 bottom-0 w-[4px] bg-white" />
                    <div className="absolute right-0 top-[372px] h-[100px] w-[4px] bg-[#6f7f8f]" />
                </div>

                {/* 3d view */}
                <div className="flex-1 bg-black overflow-hidden">
                    <Canvas />
                </div>
            </div>
        </div>
    );
};

export default App;
